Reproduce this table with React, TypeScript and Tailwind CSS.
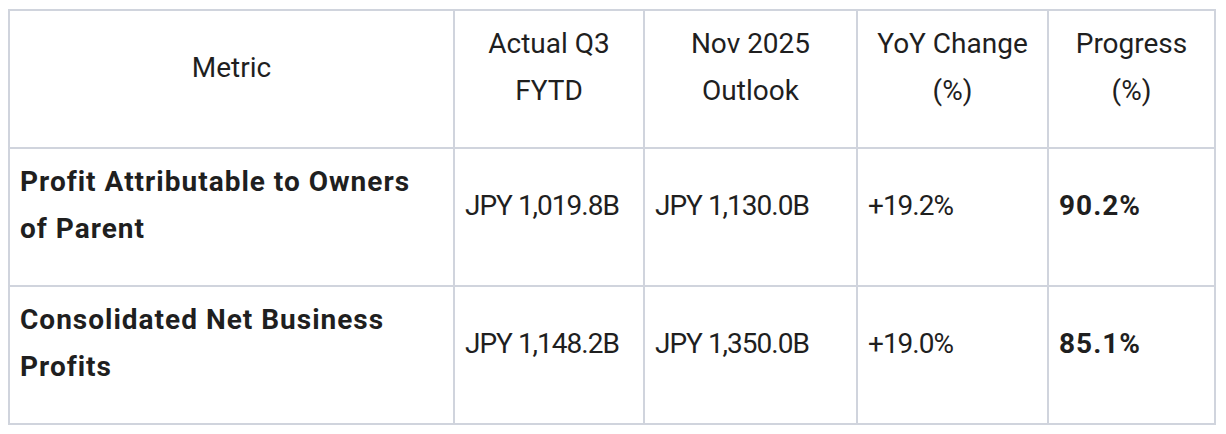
import React from 'react';

const rows = [
  {
    metric: 'Profit Attributable to Owners of Parent',
    actual: 'JPY 1,019.8B',
    outlook: 'JPY 1,130.0B',
    yoy: '+19.2%',
    progress: '90.2%',
  },
  {
    metric: 'Consolidated Net Business Profits',
    actual: 'JPY 1,148.2B',
    outlook: 'JPY 1,350.0B',
    yoy: '+19.0%',
    progress: '85.1%',
  },
];

const headers = ['Metric', 'Actual Q3 FYTD', 'Nov 2025 Outlook', 'YoY Change (%)', 'Progress (%)'];
const widths = ['w-[445px]', 'w-[190px]', 'w-[213px]', 'w-[191px]', 'w-[167px]'];

const cell = 'border-2 border-[#d0d4dd] px-[10px] pt-[9px] pb-[11px] align-middle';

export default function App() {
  return (
    <div className="bg-white w-[1226px] h-[434px] pl-[8px] pt-[9px] font-['Roboto',sans-serif] text-[#1f1f1f]">
      <table className="table-fixed border-collapse w-[1208px] text-[28px] leading-[47px]">
        <colgroup>
          {widths.map((w, i) => (
            <col key={i} className={w} />
          ))}
        </colgroup>
        <thead>
          <tr>
            {headers.map((h) => (
              <th key={h} className={`${cell} text-center font-normal`}>
                <div className="mb-[22px]">{h}</div>
              </th>
            ))}
          </tr>
        </thead>
        <tbody>
          {rows.map((r) => (
            <tr key={r.metric}>
              <td className={`${cell} font-bold tracking-[1px]`}>
                <div className="mb-[22px]">{r.metric}</div>
              </td>
              <td className={`${cell} tracking-[-1px]`}>
                <div className="mb-[22px]">{r.actual}</div>
              </td>
              <td className={`${cell} tracking-[-1px]`}>
                <div className="mb-[22px]">{r.outlook}</div>
              </td>
              <td className={`${cell} tracking-[-1px]`}>
                <div className="mb-[22px]">{r.yoy}</div>
              </td>
              <td className={`${cell} font-bold tracking-[1px]`}>
                <div className="mb-[22px]">{r.progress}</div>
              </td>
            </tr>
          ))}
        </tbody>
      </table>
    </div>
  );
}
